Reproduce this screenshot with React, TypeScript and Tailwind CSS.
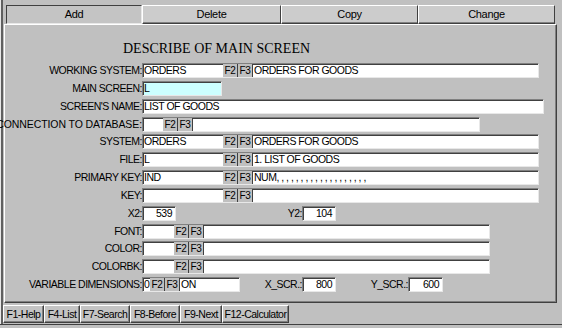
import React from "react";

const sunken =
  "border border-t-[#808080] border-l-[#808080] border-b-[#e8e8e8] border-r-[#e8e8e8] shadow-[inset_1px_1px_0_#404040]";

const raised =
  "border border-t-white border-l-white border-b-[#404040] border-r-[#404040] shadow-[inset_-1px_-1px_0_#808080]";

function Key({ k }: { k: string }) {
  return (
    <div className="flex w-[15px] shrink-0 items-center justify-center border-r border-r-[#404040] bg-[#c0c0c0] text-[10px] tracking-[-0.3px]">
      {k}
    </div>
  );
}

function Box({
  w,
  text = "",
  right = false,
  bg = "bg-white",
}: {
  w: string;
  text?: string;
  right?: boolean;
  bg?: string;
}) {
  return (
    <div
      className={`flex h-[15px] shrink-0 items-center overflow-hidden whitespace-nowrap ${sunken} ${bg} ${w} ${
        right ? "justify-end pr-[3px]" : "pl-px"
      }`}
    >
      {text}
    </div>
  );
}

function Row({
  label,
  wide = false,
  children,
}: {
  label: string;
  wide?: boolean;
  children?: React.ReactNode;
}) {
  return (
    <div className="flex h-[15px] items-stretch">
      <div
        className={`flex w-[137px] shrink-0 items-center justify-end whitespace-nowrap ${
          wide ? "tracking-[-0.1px]" : ""
        }`}
      >
        {label}
      </div>
      {children}
    </div>
  );
}

// white | F2 | F3 | white, in one sunken strip
function Lookup({
  w,
  code = "",
  first,
  rest = "",
}: {
  w: string;
  code?: string;
  first: string;
  rest?: string;
}) {
  return (
    <div className={`flex h-[15px] shrink-0 overflow-hidden ${sunken} bg-white ${w}`}>
      <div className={`flex shrink-0 items-center whitespace-nowrap pl-px ${first}`}>{code}</div>
      <Key k="F2" />
      <Key k="F3" />
      <div className="flex flex-1 items-center whitespace-nowrap pl-px">{rest}</div>
    </div>
  );
}

export default function App() {
  const tabs = [
    { name: "Add", w: "w-[136px]", active: true },
    { name: "Delete", w: "w-[139px]", active: false },
    { name: "Copy", w: "w-[137px]", active: false },
    { name: "Change", w: "w-[137px]", active: false },
  ];

  const keys = [
    { name: "F1-Help", w: "w-[41px]" },
    { name: "F4-List", w: "w-[36px]" },
    { name: "F7-Search", w: "w-[50px]" },
    { name: "F8-Before", w: "w-[50px]" },
    { name: "F9-Next", w: "w-[42px]" },
    { name: "F12-Calculator", w: "w-[67px]" },
  ];

  return (
    <div className="h-[328px] w-[562px] overflow-hidden bg-[#c0c0c0] font-['Liberation_Sans',Arial,sans-serif] text-[10.5px] leading-[13px] tracking-[-0.5px] text-black">
      <div className="flex h-[325px] flex-col border-b border-b-[#404040] pt-[5px] pl-[4px] shadow-[inset_1px_0_0_#e8e8e8,inset_3px_0_0_#606060]">
        {/* tabs */}
        <div className="flex h-[19px] pl-[2px]">
          {tabs.map((t) => (
            <div
              key={t.name}
              className={`flex items-center justify-center text-[11px] tracking-[-0.3px] ${t.w} ${
                t.active
                  ? "border border-t-[#404040] border-l-[#404040] border-b-[#e8e8e8] border-r-[#e8e8e8] bg-[#c4c4c4]"
                  : "border border-t-white border-l-white border-b-[#404040] border-r-[#404040] bg-[#cccccc] shadow-[inset_0_-1px_0_#808080]"
              }`}
            >
              {t.name}
            </div>
          ))}
        </div>

        {/* main panel */}
        <div className={`h-[279px] w-[553px] ${raised}`}>
          <div className="h-[38px] pt-[16px] pl-[118px] font-['Liberation_Serif',serif] text-[14px] leading-[16px] tracking-normal">
            DESCRIBE OF MAIN SCREEN
          </div>

          <div className="flex flex-col gap-[2.85px]">
            <Row label="WORKING SYSTEM:">
              <Lookup w="w-[397px]" code="ORDERS" first="w-[80px]" rest="ORDERS FOR GOODS" />
            </Row>
            <Row label="MAIN SCREEN:">
              <Box w="w-[80px]" text="L" bg="bg-[#ccffff]" />
            </Row>
            <Row label="SCREEN'S NAME:">
              <Box w="w-[402px]" text="LIST OF GOODS" />
            </Row>
            <Row label="CONNECTION TO DATABASE:" wide>
              <Lookup w="w-[338px]" first="w-[20px]" />
            </Row>
            <Row label="SYSTEM:">
              <Lookup w="w-[397px]" code="ORDERS" first="w-[80px]" rest="ORDERS FOR GOODS" />
            </Row>
            <Row label="FILE:">
              <Lookup w="w-[397px]" code="L" first="w-[80px]" rest="1. LIST OF GOODS" />
            </Row>
            <Row label="PRIMARY KEY:">
              <Lookup
                w="w-[397px]"
                code="IND"
                first="w-[80px]"
                rest="NUM, , , , , , , , , , , , , , , , , , ,"
              />
            </Row>
            <Row label="KEY:">
              <Lookup w="w-[397px]" first="w-[80px]" />
            </Row>
            <Row label="X2:">
              <Box w="w-[34px]" text="539" right />
              <div className="flex w-[126px] shrink-0 items-center justify-end">Y2:</div>
              <Box w="w-[34px]" text="104" right />
            </Row>
            <Row label="FONT:">
              <Lookup w="w-[348px]" first="w-[31px]" />
            </Row>
            <Row label="COLOR:">
              <Lookup w="w-[348px]" first="w-[31px]" />
            </Row>
            <Row label="COLORBK:">
              <Lookup w="w-[348px]" first="w-[31px]" />
            </Row>
            <Row label="VARIABLE DIMENSIONS:">
              <Lookup w="w-[98px]" code="0" first="w-[7px]" rest="ON" />
              <div className="flex w-[62px] shrink-0 items-center justify-end">X_SCR.:</div>
              <Box w="w-[34px]" text="800" right />
              <div className="flex w-[72px] shrink-0 items-center justify-end">Y_SCR.:</div>
              <Box w="w-[35px]" text="600" right />
            </Row>
          </div>
        </div>

        {/* function keys */}
        <div className="-ml-px mt-[2px] flex h-[18px]">
          {keys.map((k) => (
            <div
              key={k.name}
              className={`flex items-center justify-center whitespace-nowrap bg-[#c4c4c4] ${k.w} ${raised}`}
            >
              {k.name}
            </div>
          ))}
        </div>
      </div>
    </div>
  );
}
